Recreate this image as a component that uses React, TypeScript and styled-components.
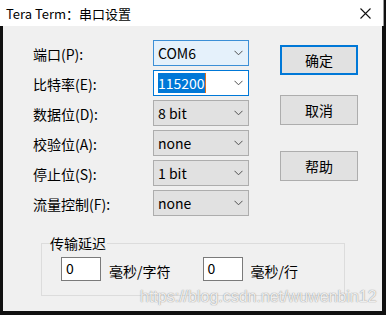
import React from "react";
import styled, { createGlobalStyle } from "styled-components";

const Global = createGlobalStyle`
  html, body { margin: 0; padding: 0; background: #101010; }
  body { width: 386px; height: 315px; overflow: hidden; }
  * { box-sizing: border-box; }
`;

const FONT = `"Noto Sans CJK SC", "Microsoft YaHei", "Noto Sans", sans-serif`;

const Screen = styled.div`
  position: relative;
  width: 386px;
  height: 315px;
  background: #101010;
  font-family: ${FONT};
  color: #000;
`;

const TitleBar = styled.div`
  width: 384px;
  height: 26px;
  background: #fff;
  display: flex;
  align-items: center;
  justify-content: space-between;
  padding: 0 12px 0 6px;
  border-right: 1px solid #9a9a9a;
`;

const TitleText = styled.span`
  font-size: 13px;
  line-height: 16px;
  margin-top: 1px;
`;

const Body = styled.div`
  margin: 0 4px 0 3px;
  height: 285px;
  background: #f0f0f0;
  padding: 14px 0 0 30px;
  display: flex;
  flex-direction: column;
`;

const TopArea = styled.div`
  display: flex;
  align-items: flex-start;
`;

const Form = styled.div`
  display: grid;
  grid-template-columns: 120px 96px;
  grid-auto-rows: 26px;
  row-gap: 4px;
  align-items: center;
`;

const Label = styled.span`
  font-size: 14px;
  line-height: 16px;
  margin-top: 1px;
`;

type ComboVariant = "hover" | "focus" | "normal";

const Combo = styled.div<{ $variant: ComboVariant }>`
  height: 26px;
  display: flex;
  align-items: center;
  justify-content: space-between;
  padding: 0 5px 0 3px;
  font-size: 14px;
  background: ${(p) =>
    p.$variant === "hover" ? "#e5f1fb" : p.$variant === "focus" ? "#ffffff" : "#e1e1e1"};
  border: 1px solid
    ${(p) => (p.$variant === "hover" ? "#3c8fd6" : p.$variant === "focus" ? "#0078d7" : "#adadad")};
`;

const ComboValue = styled.span`
  padding-left: 1px;
  line-height: 18px;
  display: flex;
  align-items: center;
`;

const Selected = styled.span`
  background: #0078d7;
  color: #fff;
  padding: 1px 0;
  line-height: 18px;
`;

const Caret = styled.span`
  display: inline-block;
  width: 1px;
  height: 20px;
  background: #e07020;
`;

const Buttons = styled.div`
  display: flex;
  flex-direction: column;
  margin-left: 31px;
  padding-top: 5px;
`;

const Button = styled.div<{ $default?: boolean; $gap: number }>`
  width: 78px;
  height: 30px;
  margin-top: ${(p) => p.$gap}px;
  display: flex;
  align-items: center;
  justify-content: center;
  font-size: 14px;
  background: #e1e1e1;
  border: ${(p) => (p.$default ? "2px solid #0078d7" : "1px solid #adadad")};
`;

const Group = styled.fieldset`
  margin: 19px 0 0 8px;
  width: 304px;
  height: 61px;
  border: 1px solid #dcdcdc;
  padding: 0 0 0 8px;
  display: flex;
  align-items: flex-start;
`;

const Legend = styled.legend`
  font-size: 14px;
  line-height: 16px;
  padding: 0 1px 0 0;
  margin-left: 0;
`;

const DelayItem = styled.div<{ $first?: boolean }>`
  display: flex;
  align-items: center;
  margin-top: 6px;
  margin-left: ${(p) => (p.$first ? 11 : 32)}px;
`;

const NumInput = styled.div`
  width: 40px;
  height: 24px;
  background: #fff;
  border: 1px solid #7a7a7a;
  font-size: 14px;
  line-height: 20px;
  padding-left: 4px;
`;

const Unit = styled.span`
  font-size: 14px;
  margin-left: 8px;
  margin-top: 3px;
`;

const Watermark = styled.div`
  position: absolute;
  left: 140px;
  top: 287px;
  font-family: "Liberation Sans", Arial, sans-serif;
  font-size: 16px;
  line-height: 20px;
  color: rgba(255, 255, 255, 0.85);
  text-shadow: 0 0 1px rgba(110, 110, 110, 0.55), 0 0 1px rgba(110, 110, 110, 0.55);
`;

const Chevron = () => (
  <svg width="9" height="6" viewBox="0 0 9 6">
    <path d="M0.5 0.8 L4.5 4.8 L8.5 0.8" fill="none" stroke="#505050" strokeWidth="1" />
  </svg>
);

const Close = () => (
  <svg width="11" height="11" viewBox="0 0 11 11">
    <path d="M0.5 0.5 L10.5 10.5 M10.5 0.5 L0.5 10.5" stroke="#111" strokeWidth="1.1" />
  </svg>
);

const rows: { label: string; value: string; variant: ComboVariant }[] = [
  { label: "端口(P):", value: "COM6", variant: "hover" },
  { label: "比特率(E):", value: "115200", variant: "focus" },
  { label: "数据位(D):", value: "8 bit", variant: "normal" },
  { label: "校验位(A):", value: "none", variant: "normal" },
  { label: "停止位(S):", value: "1 bit", variant: "normal" },
  { label: "流量控制(F):", value: "none", variant: "normal" },
];

export default function App() {
  return (
    <Screen>
      <Global />
      <TitleBar>
        <TitleText>Tera Term：串口设置</TitleText>
        <Close />
      </TitleBar>
      <Body>
        <TopArea>
          <Form>
            {rows.map((r) => (
              <React.Fragment key={r.label}>
                <Label>{r.label}</Label>
                <Combo $variant={r.variant}>
                  <ComboValue>
                    {r.variant === "focus" ? (
                      <>
                        <Selected>{r.value}</Selected>
                        <Caret />
                      </>
                    ) : (
                      r.value
                    )}
                  </ComboValue>
                  <Chevron />
                </Combo>
              </React.Fragment>
            ))}
          </Form>
          <Buttons>
            <Button $default $gap={0}>确定</Button>
            <Button $gap={20}>取消</Button>
            <Button $gap={26}>帮助</Button>
          </Buttons>
        </TopArea>
        <Group>
          <Legend>传输延迟</Legend>
          <DelayItem $first>
            <NumInput>0</NumInput>
            <Unit>毫秒/字符</Unit>
          </DelayItem>
          <DelayItem>
            <NumInput>0</NumInput>
            <Unit>毫秒/行</Unit>
          </DelayItem>
        </Group>
      </Body>
      <Watermark>https://blog.csdn.net/wuwenbin12</Watermark>
    </Screen>
  );
}
